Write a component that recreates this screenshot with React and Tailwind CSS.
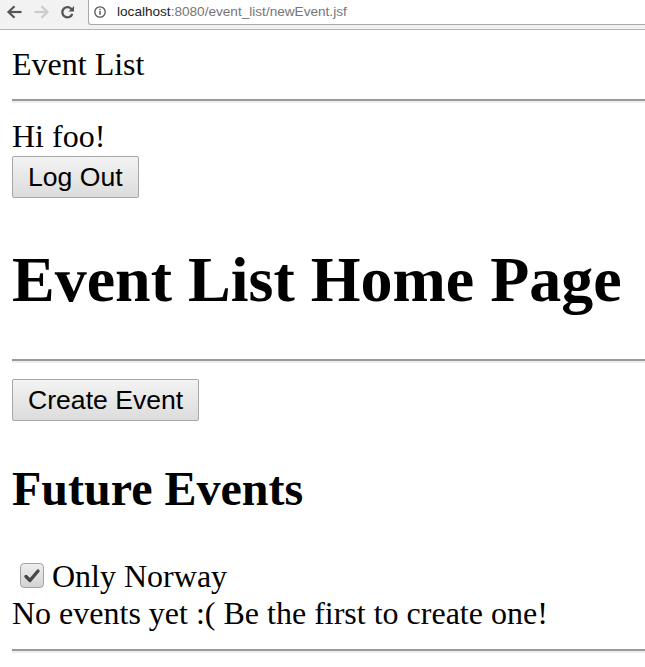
import React from "react";

function Btn({ children }) {
  return (
    <button className="flex h-[42px] items-center border border-[#a6a6a6] rounded-[2px] bg-gradient-to-b from-[#f3f3f3] to-[#dcdcdc] px-[15px] font-['Liberation_Sans',Arial,sans-serif] text-[26.6px] leading-[30px] text-black">
      {children}
    </button>
  );
}

function Hr({ className = "" }) {
  return <div className={"h-[4px] border-t-2 border-t-[#9a9a9a] bg-[#eeeeee] " + className} />;
}

export default function App() {
  return (
    <div className="min-h-[667px] w-[645px] overflow-hidden bg-white text-black font-['Liberation_Serif','Times_New_Roman',serif]">
      {/* browser toolbar */}
      <div className="flex h-[30px] items-start bg-[#f2f2f2] border-b border-b-[#b4b4b4]">
        <div className="flex h-[24px] w-[88px] items-center">
          <svg className="ml-[6px]" width="16" height="14" viewBox="0 0 16 14" fill="none" stroke="#555" strokeWidth="2.2">
            <path d="M15.5 7H3" />
            <path d="M8.5 1.2L2.5 7L8.5 12.8" />
          </svg>
          <svg className="ml-[12px]" width="16" height="14" viewBox="0 0 16 14" fill="none" stroke="#cbcbcb" strokeWidth="2.2">
            <path d="M0.5 7H13" />
            <path d="M7.5 1.2L13.5 7L7.5 12.8" />
          </svg>
          <svg className="ml-[11px]" width="13" height="14" viewBox="0 0 13 14" fill="none">
            <path d="M10.8 4.6A5.1 5.1 0 1 0 11.3 8.8" stroke="#555" strokeWidth="2.3" />
            <path d="M13 1V6.4H7.6Z" fill="#555" />
          </svg>
        </div>
        <div className="flex h-[25px] flex-1 items-center bg-white border-l border-b border-[#a9a9a9] rounded-bl-[3px]">
          <svg className="ml-[5px]" width="12" height="12" viewBox="0 0 12 12" fill="none">
            <circle cx="6" cy="6" r="5.2" stroke="#555" strokeWidth="1.3" />
            <rect x="5.3" y="5" width="1.4" height="3.8" fill="#555" />
            <rect x="5.3" y="2.8" width="1.4" height="1.4" fill="#555" />
          </svg>
          <span className="ml-[11px] font-['Liberation_Sans',Arial,sans-serif] text-[13.6px] leading-[16px] whitespace-nowrap">
            <span className="text-[#222]">localhost</span>
            <span className="text-[#767676]">:8080/event_list/newEvent.jsf</span>
          </span>
        </div>
      </div>

      {/* page body */}
      <div className="pl-[12px] pt-[17px]">
        <div className="text-[32px] leading-[35px]">Event List</div>
        <Hr className="mt-[17px]" />
        <div className="mt-[16px] text-[32px] leading-[35px]">Hi foo!</div>
        <div className="mt-[2px] flex">
          <Btn>Log Out</Btn>
        </div>
        <h1 className="mt-[46px] mb-[44px] text-[64px] leading-[71px] font-bold whitespace-nowrap">Event List Home Page</h1>
        <Hr />
        <div className="mt-[16px] flex">
          <Btn>Create Event</Btn>
        </div>
        <h2 className="mt-[41px] mb-[44px] text-[48px] leading-[53px] font-bold">Future Events</h2>
        <div className="flex items-start">
          <span className="ml-[8px] mt-[4px] flex h-[25px] w-[24px] items-center justify-center rounded-[4px] border border-[#a3a3a3] bg-gradient-to-b from-[#eeeeee] to-[#d3d3d3]">
            <svg width="18" height="18" viewBox="0 0 18 18" fill="none">
              <path d="M3 9.5L7 13.5L15 4" stroke="#474747" strokeWidth="3.4" strokeLinecap="round" strokeLinejoin="round" />
            </svg>
          </span>
          <span className="ml-[8px] text-[32px] leading-[35px]">Only Norway</span>
        </div>
        <div className="mt-[2px] text-[32px] leading-[35px] whitespace-nowrap">No events yet :( Be the first to create one!</div>
        <Hr className="mt-[18px]" />
      </div>
    </div>
  );
}
